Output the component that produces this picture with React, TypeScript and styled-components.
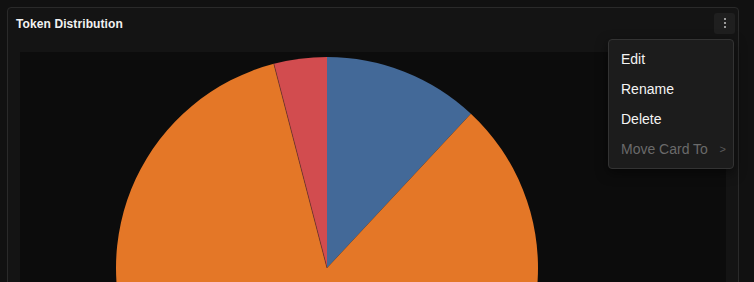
import styled, { createGlobalStyle } from 'styled-components';

const GlobalStyle = createGlobalStyle`
  html, body {
    margin: 0;
    padding: 0;
    background: #111111;
    font-family: 'Liberation Sans', Arial, sans-serif;
  }
`;

const Page = styled.div`
  padding: 7px 15px 0 7px;
  height: 282px;
  overflow: hidden;
  box-sizing: border-box;
`;

const Card = styled.div`
  position: relative;
  background: #141414;
  border: 1px solid #2a2a2a;
  border-radius: 4px;
  height: 320px;
`;

const CardHeader = styled.div`
  display: flex;
  align-items: center;
  justify-content: space-between;
  height: 30px;
  padding: 0 3px 0 8px;
`;

const CardTitle = styled.div`
  color: #f2f2f2;
  font-size: 12px;
  font-weight: 700;
  letter-spacing: 0.1px;
  padding-top: 1px;
`;

const KebabButton = styled.button`
  width: 21px;
  height: 21px;
  padding: 0;
  border: none;
  border-radius: 3px;
  background: #1f1f1f;
  display: flex;
  flex-direction: column;
  align-items: center;
  justify-content: center;
  gap: 2px;
  cursor: pointer;
`;

const Dot = styled.span`
  width: 2px;
  height: 2px;
  background: #9a9a9a;
`;

const Menu = styled.div`
  position: absolute;
  top: 31px;
  right: 4px;
  width: 124px;
  padding: 4px 0;
  background: #1c1c1c;
  border: 1px solid #333333;
  border-radius: 4px;
  box-shadow: 0 4px 12px rgba(0, 0, 0, 0.5);
  z-index: 2;
`;

const MenuItem = styled.div<{ disabled?: boolean }>`
  display: flex;
  align-items: center;
  justify-content: space-between;
  height: 30px;
  padding: 0 7px 0 12px;
  font-size: 14px;
  color: ${(p) => (p.disabled ? '#6a6a6a' : '#f4f4f4')};
  cursor: ${(p) => (p.disabled ? 'default' : 'pointer')};
`;

const Chevron = styled.span`
  font-size: 11px;
  color: #5a5a5a;
`;

const ChartArea = styled.div`
  margin: 14px 12px 0;
  background: #0c0c0c;
  height: 270px;
`;

const slices = [
  { from: 0, to: 43, color: '#436998' },
  { from: 43, to: 345.4, color: '#e47727' },
  { from: 345.4, to: 360, color: '#d24c4f' },
];

const cx = 307;
const cy = 216;
const r = 211;

const point = (deg: number) => {
  const a = (deg * Math.PI) / 180;
  return [cx + r * Math.sin(a), cy - r * Math.cos(a)];
};

const slicePath = (from: number, to: number) => {
  const [x1, y1] = point(from);
  const [x2, y2] = point(to);
  const large = to - from > 180 ? 1 : 0;
  return `M ${cx} ${cy} L ${x1} ${y1} A ${r} ${r} 0 ${large} 1 ${x2} ${y2} Z`;
};

const PieChart = () => {
  const [sx, sy] = point(345.4);
  return (
    <svg width="100%" height="270" viewBox="0 0 706 270">
      {slices.map((s) => (
        <path key={s.from} d={slicePath(s.from, s.to)} fill={s.color} />
      ))}
      <line x1={cx} y1={cy} x2={sx} y2={sy} stroke="#5a2e2a" strokeWidth={0.6} />
    </svg>
  );
};

const menuItems = ['Edit', 'Rename', 'Delete'];

const App = () => (
  <>
    <GlobalStyle />
    <Page>
      <Card>
        <CardHeader>
          <CardTitle>Token Distribution</CardTitle>
          <KebabButton aria-label="More">
            <Dot />
            <Dot />
            <Dot />
          </KebabButton>
        </CardHeader>
        <Menu>
          {menuItems.map((item) => (
            <MenuItem key={item}>{item}</MenuItem>
          ))}
          <MenuItem disabled>
            Move Card To
            <Chevron>&gt;</Chevron>
          </MenuItem>
        </Menu>
        <ChartArea>
          <PieChart />
        </ChartArea>
      </Card>
    </Page>
  </>
);

export default App;
